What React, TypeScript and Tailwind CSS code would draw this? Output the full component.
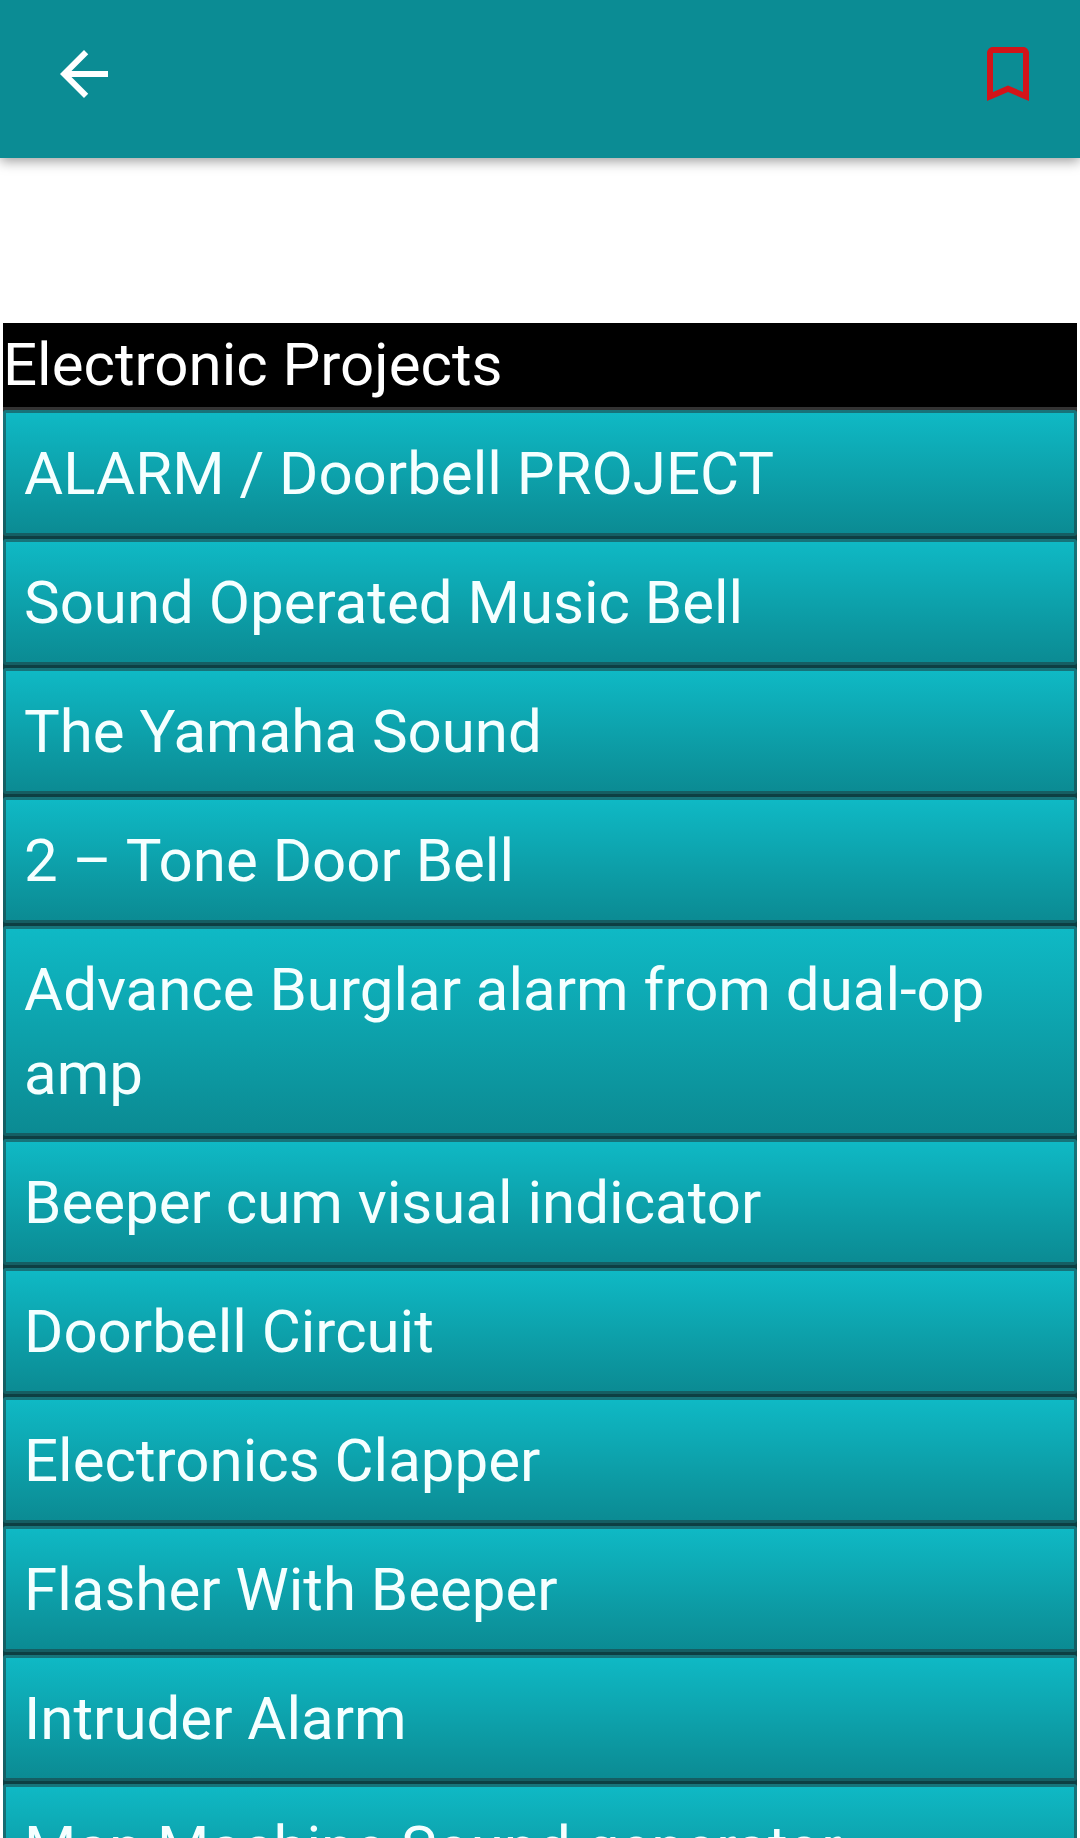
const projects = [
  'ALARM / Doorbell PROJECT',
  'Sound Operated Music Bell',
  'The Yamaha Sound',
  '2 – Tone Door Bell',
  'Advance Burglar alarm from dual-op amp',
  'Beeper cum visual indicator',
  'Doorbell Circuit',
  'Electronics Clapper',
  'Flasher With Beeper',
  'Intruder Alarm',
  'Man Machine Sound generator',
];

function BackIcon() {
  return (
    <svg viewBox="0 0 24 24" className="size-18 fill-white" aria-hidden="true">
      <path d="M20 11H7.83l5.59-5.59L12 4l-8 8 8 8 1.41-1.41L7.83 13H20v-2z" />
    </svg>
  );
}

function BookmarkIcon() {
  return (
    <svg viewBox="0 0 24 24" className="size-18 fill-[#d31419]" aria-hidden="true">
      <path d="M17 3H7c-1.1 0-1.99.9-1.99 2L5 21l7-3 7 3V5c0-1.1-.9-2-2-2zm0 15l-5-2.18L7 18V5h10v13z" />
    </svg>
  );
}

function Header() {
  return (
    <header className="relative z-10 flex shrink-0 items-center justify-between bg-[#0b8c94] pt-[38px] pr-9 pb-12 pl-12 shadow-[0_3px_12px_rgba(0,0,0,0.4)]">
      <button type="button" aria-label="Back">
        <BackIcon />
      </button>
      <button type="button" aria-label="Bookmark">
        <BookmarkIcon />
      </button>
    </header>
  );
}

export default function App() {
  return (
    <div className="flex h-screen flex-col bg-white font-['Roboto',sans-serif] text-[60px] leading-[84px] text-white">
      <Header />

      <main className="flex-1 overflow-y-auto px-[3px] pt-[165px] [scrollbar-width:none]">
        <h1 className="bg-black">Electronic Projects</h1>

        <ul>
          {projects.map((name) => (
            <li
              key={name}
              className="border-t-3 border-[#0d3f43] bg-[#0d3f43] first:border-[#333333] first:bg-[#333333]"
            >
              <a
                href="#"
                className="block rounded-[3px] border-3 border-[#1f3a3c]/55 bg-linear-to-b from-[#0fbac6] to-[#0b8a92] bg-origin-border px-[18px] pt-[19px] pb-[17px] text-[#f5ffff]"
              >
                {name}
              </a>
            </li>
          ))}
        </ul>
      </main>
    </div>
  );
}
